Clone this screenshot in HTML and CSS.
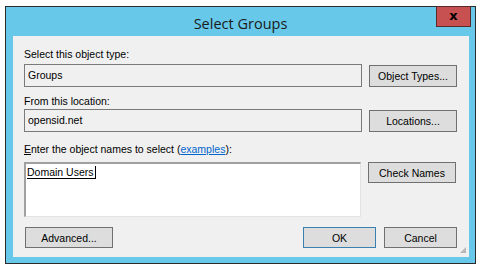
FILE: index.html
```html
<!DOCTYPE html>
<html lang="en">
<head>
    <meta charset="UTF-8">
    <title>Select Groups</title>
    <link rel="stylesheet" href="styles.css">
</head>
<body>
    <div class="window">
        <div class="titlebar">
            <span class="title">Select Groups</span>
            <div class="close">x</div>
        </div>
        <div class="client">
            <div class="label l1">Select this object type:</div>
            <div class="row">
                <div class="field">Groups</div>
                <button class="btn">Object Types...</button>
            </div>

            <div class="label l2">From this location:</div>
            <div class="row">
                <div class="field">opensid.net</div>
                <button class="btn">Locations...</button>
            </div>

            <div class="label l3"><u>E</u>nter the object names to select (<a href="#">examples</a>):</div>
            <div class="row top">
                <div class="names"><span class="entry">Domain Users</span></div>
                <button class="btn short">Check Names</button>
            </div>

            <div class="footer">
                <button class="btn short">Advanced...</button>
                <div class="right">
                    <button class="btn short small ok">OK</button>
                    <button class="btn short small">Cancel</button>
                </div>
            </div>
            <div class="grip"></div>
        </div>
    </div>
</body>
</html>
```
FILE: styles.css
```css
body { margin: 0; background: #fff; font-family: "Liberation Sans", Arial, sans-serif; font-size: 10.5px; color: #000; }
.window { margin: 6px 0 0 5px; width: 456px; height: 221px; border: 1px solid #2b2b2b; background: #67c8e9; padding: 29px 6px 6px 7px; position: relative; }
.titlebar { position: absolute; left: 0; right: 0; top: 0; height: 29px; display: flex; align-items: center; justify-content: center; }
.title { font-family: "Open Sans", "Noto Sans", sans-serif; font-size: 14.5px; color: #1a1a1a; margin-top: 3px; }
.close { position: absolute; right: 4px; top: -1px; width: 33px; height: 19px; background: #c75050; border: 1px solid #5b2a2a; color: #000; font-weight: bold; font-family: "DejaVu Sans", sans-serif; font-size: 13px; line-height: 17px; text-align: center; }
.client { background: #f0f0f0; height: 221px; padding: 0 12px 0 11px; position: relative; box-sizing: border-box; }
.label { line-height: 13px; height: 13px; }
.l1 { padding: 12px 0 3px; }
.l2 { padding: 8px 0 1px; }
.l3 { padding: 11px 0 6px; }
.label a { color: #0066cc; }
.row { display: flex; align-items: flex-end; gap: 7px; }
.row.top { align-items: flex-start; }
.field { width: 338px; height: 23px; box-sizing: border-box; border: 1px solid #7a7a7a; padding: 4px 3px; line-height: 13px; }
.btn { width: 88px; height: 22px; box-sizing: border-box; border: 1px solid #707070; background: #dddddd; font: inherit; padding: 0; color: #000; }
.btn.short { height: 21px; }
.btn.small { width: 73px; }
.names { width: 337px; height: 55px; box-sizing: border-box; background: #fff; border-top: 2px solid #a0a0a0; border-left: 2px solid #a0a0a0; border-right: 1px solid #e3e3e3; border-bottom: 1px solid #e3e3e3; padding: 2px 1px; line-height: 13px; }
.entry { border-bottom: 1px solid #000; border-right: 1px solid #000; padding: 0 1px 0 0; }
.footer { display: flex; justify-content: space-between; margin-top: 10px; padding-left: 1px; }
.right { display: flex; gap: 8px; }
.ok { border-color: #3c7fb1; }
.grip { position: absolute; right: 3px; bottom: 4px; width: 6px; height: 6px; background-image: radial-gradient(circle, #b8b8b8 0.8px, transparent 1px); background-size: 2px 2px; clip-path: polygon(100% 0, 100% 100%, 0 100%); }
```
